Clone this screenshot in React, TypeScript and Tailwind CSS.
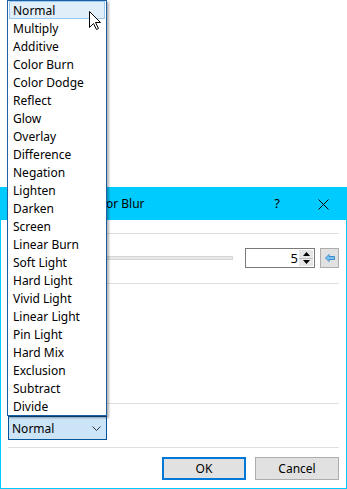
import React from "react";

const modes = [
  "Normal",
  "Multiply",
  "Additive",
  "Color Burn",
  "Color Dodge",
  "Reflect",
  "Glow",
  "Overlay",
  "Difference",
  "Negation",
  "Lighten",
  "Darken",
  "Screen",
  "Linear Burn",
  "Soft Light",
  "Hard Light",
  "Vivid Light",
  "Linear Light",
  "Pin Light",
  "Hard Mix",
  "Exclusion",
  "Subtract",
  "Divide",
];

const font = "font-['Segoe_UI','Noto_Sans',sans-serif]";

export default function App() {
  return (
    <div className={`relative w-[347px] h-[489px] bg-white overflow-hidden text-[12px] text-black ${font}`}>
      <div className="h-[187px]" />

      {/* dialog */}
      <div className="h-[302px] border border-[#00cbff] flex flex-col bg-white">
        <div className="h-[32px] bg-[#00cbff] flex items-center">
          <span className="ml-[87px] flex-1">Color Blur</span>
          <span className="w-[46px] text-center text-[13px] ml-[2px]">?</span>
          <span className="w-[46px] flex justify-center">
            <svg width="11" height="11" viewBox="0 0 11 11">
              <path d="M0.5 0.5 L10.5 10.5 M10.5 0.5 L0.5 10.5" stroke="#000" strokeWidth="1" />
            </svg>
          </span>
        </div>

        <div className="flex-1 flex flex-col px-[7px]">
          <div className="mt-[13px] h-px bg-[#dcdfe3]" />

          <div className="mt-[14px] h-[20px] flex items-center">
            <div className="flex-1 ml-[6px] mr-[12px] h-[4px] bg-[#e7eaea] border border-[#d6d6d6]" />
            <div className="w-[70px] h-[20px] border border-[#7a7a7a] flex">
              <div className="flex-1 flex items-center justify-end pr-[1px] leading-none text-[13px]">5</div>
              <div className="w-[14px] my-[1px] mr-[1px] flex flex-col bg-[#e6e6e6]">
                <div className="flex-1 flex items-center justify-center border-b border-[#bdbdbd]">
                  <svg width="7" height="4" viewBox="0 0 7 4">
                    <path d="M0 4 L3.5 0 L7 4 Z" fill="#000" />
                  </svg>
                </div>
                <div className="flex-1 flex items-center justify-center">
                  <svg width="7" height="4" viewBox="0 0 7 4">
                    <path d="M0 0 L3.5 4 L7 0 Z" fill="#000" />
                  </svg>
                </div>
              </div>
            </div>
            <div className="ml-[5px] w-[19px] h-[20px] bg-[#e1e1e1] border border-[#adadad] flex items-center justify-center">
              <svg width="10" height="8" viewBox="0 0 10 8">
                <path
                  d="M0.5 4 L4 0.5 L4 2.5 L9.5 2.5 L9.5 5.5 L4 5.5 L4 7.5 Z"
                  fill="#7cc0ee"
                  stroke="#3b8fd0"
                  strokeWidth="1"
                  strokeLinejoin="round"
                />
              </svg>
            </div>
          </div>

          <div className="mt-[15px] h-px bg-[#dcdfe3]" />
          <div className="mt-[119px] h-px bg-[#dcdfe3]" />

          <div className="mt-[12px] w-[99px] h-[24px] border border-[#005499] bg-[#cce4f7] flex items-center pl-[3px] pr-[5px]">
            <span className="flex-1 pt-[2px]">Normal</span>
            <svg width="9" height="5" viewBox="0 0 9 5">
              <path d="M0.5 0.5 L4.5 4.5 L8.5 0.5" fill="none" stroke="#333" strokeWidth="1" />
            </svg>
          </div>

          <div className="mt-[7px] h-px bg-[#dcdfe3]" />

          <div className="mt-[9px] flex justify-end gap-[9px]">
            <button className="w-[84px] h-[23px] bg-[#e1e1e1] border-2 border-[#0078d7] flex items-center justify-center">
              OK
            </button>
            <button className="w-[84px] h-[23px] bg-[#e1e1e1] border border-[#adadad] flex items-center justify-center">
              Cancel
            </button>
          </div>
        </div>
      </div>

      {/* dropdown list */}
      <div className="absolute left-[7px] top-0 w-[100px] border border-[#1d5fa5] bg-white shadow-[2px_2px_2px_rgba(0,0,0,0.3)] px-[1px]">
        {modes.map((m, i) => (
          <div
            key={m}
            className={
              i === 0
                ? "h-[18px] flex items-center pt-[2px] pl-[3px] bg-[#e0eef9] border border-[#99c9ef]"
                : "h-[18px] flex items-center pt-[2px] pl-[4px]"
            }
          >
            {m}
          </div>
        ))}
      </div>

      {/* mouse pointer */}
      <svg className="absolute left-[89px] top-[11px]" width="13" height="20" viewBox="0 0 13 20">
        <path
          d="M0.5 0.5 L0.5 16.5 L4.5 12.5 L7.5 18.5 L9.5 17.5 L6.5 11.5 L11.5 11.5 Z"
          fill="#fff"
          stroke="#000"
          strokeWidth="1"
          strokeLinejoin="miter"
        />
      </svg>
    </div>
  );
}
